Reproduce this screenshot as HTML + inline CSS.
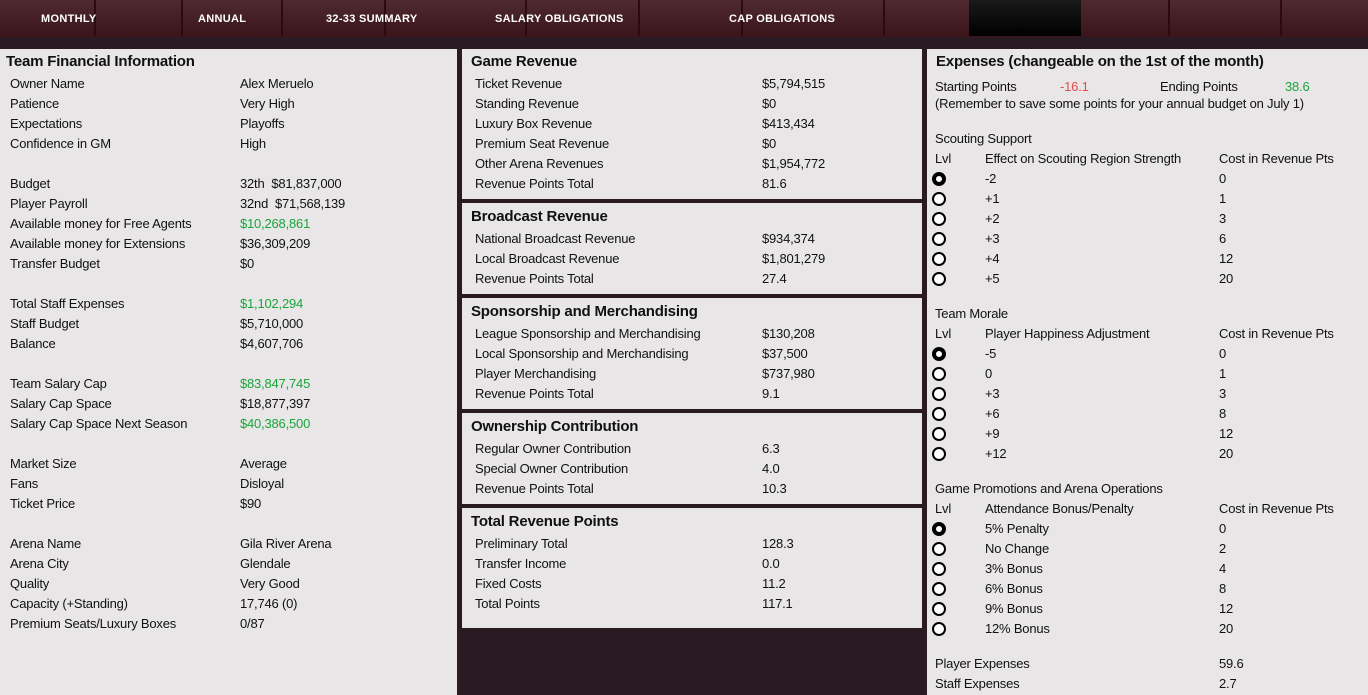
<!DOCTYPE html>
<html><head><meta charset="utf-8"><style>
*{margin:0;padding:0;box-sizing:border-box}
body{width:1368px;height:695px;overflow:hidden;background:#2a1a22;font-family:"Liberation Sans",sans-serif;color:#111;position:relative}
.nav{position:absolute;left:0;top:0;width:1368px;height:37px;background:linear-gradient(#4e2a31,#3a1419)}
.strip{position:absolute;left:0;top:37px;width:1368px;height:12px;background:#2a1a24}
.dv{position:absolute;top:0;width:2px;height:36px;background:#2a0c10}
.nl{position:absolute;top:13px;color:#fff;font-weight:bold;font-size:11px;letter-spacing:0.3px;font-family:"Liberation Sans",sans-serif}
.p{position:absolute;background:#e8e6e7}
.t{position:absolute;font-size:15px;font-weight:bold;letter-spacing:-0.2px;color:#111}
.r{position:absolute;font-size:13px;line-height:20px;height:20px;white-space:nowrap;letter-spacing:-0.2px}
.g{color:#1aa53a}.rd{color:#e84a4a}
.rb{position:absolute;width:14px;height:14px;border:2px solid #000;border-radius:50%;background:#fff}
.rb.s{border-width:4px}
</style></head><body>
<div class="nav">
<div class="dv" style="left:94px"></div><div class="dv" style="left:181px"></div><div class="dv" style="left:281px"></div><div class="dv" style="left:384px"></div><div class="dv" style="left:525px"></div><div class="dv" style="left:638px"></div><div class="dv" style="left:741px"></div><div class="dv" style="left:883px"></div><div class="dv" style="left:1168px"></div><div class="dv" style="left:1280px"></div>
<div style="position:absolute;left:969px;top:0;width:112px;height:36px;background:linear-gradient(#1a1a1a,#000)"></div>
<div class="nl" style="left:41px">MONTHLY</div>
<div class="nl" style="left:198px">ANNUAL</div>
<div class="nl" style="left:326px">32-33 SUMMARY</div>
<div class="nl" style="left:495px">SALARY OBLIGATIONS</div>
<div class="nl" style="left:729px">CAP OBLIGATIONS</div>
</div>
<div class="strip"></div>

<div class="p" style="left:0;top:49px;width:457px;height:646px"></div>
<div class="p" style="left:462px;top:49px;width:460px;height:150px"></div>
<div class="p" style="left:462px;top:203px;width:460px;height:91px"></div>
<div class="p" style="left:462px;top:298px;width:460px;height:111px"></div>
<div class="p" style="left:462px;top:413px;width:460px;height:91px"></div>
<div class="p" style="left:462px;top:508px;width:460px;height:120px"></div>
<div class="p" style="left:927px;top:49px;width:441px;height:646px"></div>

<div class="t" style="left:6px;top:53px">Team Financial Information</div>
<div class="r" style="left:10px;top:74px">Owner Name</div><div class="r" style="left:240px;top:74px">Alex Meruelo</div>
<div class="r" style="left:10px;top:94px">Patience</div><div class="r" style="left:240px;top:94px">Very High</div>
<div class="r" style="left:10px;top:114px">Expectations</div><div class="r" style="left:240px;top:114px">Playoffs</div>
<div class="r" style="left:10px;top:134px">Confidence in GM</div><div class="r" style="left:240px;top:134px">High</div>
<div class="r" style="left:10px;top:174px">Budget</div><div class="r" style="left:240px;top:174px">32th&nbsp;&nbsp;$81,837,000</div>
<div class="r" style="left:10px;top:194px">Player Payroll</div><div class="r" style="left:240px;top:194px">32nd&nbsp;&nbsp;$71,568,139</div>
<div class="r" style="left:10px;top:214px">Available money for Free Agents</div><div class="r g" style="left:240px;top:214px">$10,268,861</div>
<div class="r" style="left:10px;top:234px">Available money for Extensions</div><div class="r" style="left:240px;top:234px">$36,309,209</div>
<div class="r" style="left:10px;top:254px">Transfer Budget</div><div class="r" style="left:240px;top:254px">$0</div>
<div class="r" style="left:10px;top:294px">Total Staff Expenses</div><div class="r g" style="left:240px;top:294px">$1,102,294</div>
<div class="r" style="left:10px;top:314px">Staff Budget</div><div class="r" style="left:240px;top:314px">$5,710,000</div>
<div class="r" style="left:10px;top:334px">Balance</div><div class="r" style="left:240px;top:334px">$4,607,706</div>
<div class="r" style="left:10px;top:374px">Team Salary Cap</div><div class="r g" style="left:240px;top:374px">$83,847,745</div>
<div class="r" style="left:10px;top:394px">Salary Cap Space</div><div class="r" style="left:240px;top:394px">$18,877,397</div>
<div class="r" style="left:10px;top:414px">Salary Cap Space Next Season</div><div class="r g" style="left:240px;top:414px">$40,386,500</div>
<div class="r" style="left:10px;top:454px">Market Size</div><div class="r" style="left:240px;top:454px">Average</div>
<div class="r" style="left:10px;top:474px">Fans</div><div class="r" style="left:240px;top:474px">Disloyal</div>
<div class="r" style="left:10px;top:494px">Ticket Price</div><div class="r" style="left:240px;top:494px">$90</div>
<div class="r" style="left:10px;top:534px">Arena Name</div><div class="r" style="left:240px;top:534px">Gila River Arena</div>
<div class="r" style="left:10px;top:554px">Arena City</div><div class="r" style="left:240px;top:554px">Glendale</div>
<div class="r" style="left:10px;top:574px">Quality</div><div class="r" style="left:240px;top:574px">Very Good</div>
<div class="r" style="left:10px;top:594px">Capacity (+Standing)</div><div class="r" style="left:240px;top:594px">17,746 (0)</div>
<div class="r" style="left:10px;top:614px">Premium Seats/Luxury Boxes</div><div class="r" style="left:240px;top:614px">0/87</div>

<div class="t" style="left:471px;top:53px">Game Revenue</div>
<div class="r" style="left:475px;top:74px">Ticket Revenue</div><div class="r" style="left:762px;top:74px">$5,794,515</div>
<div class="r" style="left:475px;top:94px">Standing Revenue</div><div class="r" style="left:762px;top:94px">$0</div>
<div class="r" style="left:475px;top:114px">Luxury Box Revenue</div><div class="r" style="left:762px;top:114px">$413,434</div>
<div class="r" style="left:475px;top:134px">Premium Seat Revenue</div><div class="r" style="left:762px;top:134px">$0</div>
<div class="r" style="left:475px;top:154px">Other Arena Revenues</div><div class="r" style="left:762px;top:154px">$1,954,772</div>
<div class="r" style="left:475px;top:174px">Revenue Points Total</div><div class="r" style="left:762px;top:174px">81.6</div>

<div class="t" style="left:471px;top:208px">Broadcast Revenue</div>
<div class="r" style="left:475px;top:229px">National Broadcast Revenue</div><div class="r" style="left:762px;top:229px">$934,374</div>
<div class="r" style="left:475px;top:249px">Local Broadcast Revenue</div><div class="r" style="left:762px;top:249px">$1,801,279</div>
<div class="r" style="left:475px;top:269px">Revenue Points Total</div><div class="r" style="left:762px;top:269px">27.4</div>

<div class="t" style="left:471px;top:303px">Sponsorship and Merchandising</div>
<div class="r" style="left:475px;top:324px">League Sponsorship and Merchandising</div><div class="r" style="left:762px;top:324px">$130,208</div>
<div class="r" style="left:475px;top:344px">Local Sponsorship and Merchandising</div><div class="r" style="left:762px;top:344px">$37,500</div>
<div class="r" style="left:475px;top:364px">Player Merchandising</div><div class="r" style="left:762px;top:364px">$737,980</div>
<div class="r" style="left:475px;top:384px">Revenue Points Total</div><div class="r" style="left:762px;top:384px">9.1</div>

<div class="t" style="left:471px;top:418px">Ownership Contribution</div>
<div class="r" style="left:475px;top:439px">Regular Owner Contribution</div><div class="r" style="left:762px;top:439px">6.3</div>
<div class="r" style="left:475px;top:459px">Special Owner Contribution</div><div class="r" style="left:762px;top:459px">4.0</div>
<div class="r" style="left:475px;top:479px">Revenue Points Total</div><div class="r" style="left:762px;top:479px">10.3</div>

<div class="t" style="left:471px;top:513px">Total Revenue Points</div>
<div class="r" style="left:475px;top:534px">Preliminary Total</div><div class="r" style="left:762px;top:534px">128.3</div>
<div class="r" style="left:475px;top:554px">Transfer Income</div><div class="r" style="left:762px;top:554px">0.0</div>
<div class="r" style="left:475px;top:574px">Fixed Costs</div><div class="r" style="left:762px;top:574px">11.2</div>
<div class="r" style="left:475px;top:594px">Total Points</div><div class="r" style="left:762px;top:594px">117.1</div>

<div class="t" style="left:936px;top:53px">Expenses (changeable on the 1st of the month)</div>
<div class="r" style="left:935px;top:77px">Starting Points</div><div class="r rd" style="left:1060px;top:77px">-16.1</div>
<div class="r" style="left:1160px;top:77px">Ending Points</div><div class="r g" style="left:1285px;top:77px">38.6</div>
<div class="r" style="left:935px;top:94px">(Remember to save some points for your annual budget on July 1)</div>

<div class="r" style="left:935px;top:129px">Scouting Support</div>
<div class="r" style="left:935px;top:149px">Lvl</div><div class="r" style="left:985px;top:149px">Effect on Scouting Region Strength</div><div class="r" style="left:1219px;top:149px">Cost in Revenue Pts</div>
<div class="rb s" style="left:932px;top:172px"></div><div class="r" style="left:985px;top:169px">-2</div><div class="r" style="left:1219px;top:169px">0</div>
<div class="rb" style="left:932px;top:192px"></div><div class="r" style="left:985px;top:189px">+1</div><div class="r" style="left:1219px;top:189px">1</div>
<div class="rb" style="left:932px;top:212px"></div><div class="r" style="left:985px;top:209px">+2</div><div class="r" style="left:1219px;top:209px">3</div>
<div class="rb" style="left:932px;top:232px"></div><div class="r" style="left:985px;top:229px">+3</div><div class="r" style="left:1219px;top:229px">6</div>
<div class="rb" style="left:932px;top:252px"></div><div class="r" style="left:985px;top:249px">+4</div><div class="r" style="left:1219px;top:249px">12</div>
<div class="rb" style="left:932px;top:272px"></div><div class="r" style="left:985px;top:269px">+5</div><div class="r" style="left:1219px;top:269px">20</div>

<div class="r" style="left:935px;top:304px">Team Morale</div>
<div class="r" style="left:935px;top:324px">Lvl</div><div class="r" style="left:985px;top:324px">Player Happiness Adjustment</div><div class="r" style="left:1219px;top:324px">Cost in Revenue Pts</div>
<div class="rb s" style="left:932px;top:347px"></div><div class="r" style="left:985px;top:344px">-5</div><div class="r" style="left:1219px;top:344px">0</div>
<div class="rb" style="left:932px;top:367px"></div><div class="r" style="left:985px;top:364px">0</div><div class="r" style="left:1219px;top:364px">1</div>
<div class="rb" style="left:932px;top:387px"></div><div class="r" style="left:985px;top:384px">+3</div><div class="r" style="left:1219px;top:384px">3</div>
<div class="rb" style="left:932px;top:407px"></div><div class="r" style="left:985px;top:404px">+6</div><div class="r" style="left:1219px;top:404px">8</div>
<div class="rb" style="left:932px;top:427px"></div><div class="r" style="left:985px;top:424px">+9</div><div class="r" style="left:1219px;top:424px">12</div>
<div class="rb" style="left:932px;top:447px"></div><div class="r" style="left:985px;top:444px">+12</div><div class="r" style="left:1219px;top:444px">20</div>

<div class="r" style="left:935px;top:479px">Game Promotions and Arena Operations</div>
<div class="r" style="left:935px;top:499px">Lvl</div><div class="r" style="left:985px;top:499px">Attendance Bonus/Penalty</div><div class="r" style="left:1219px;top:499px">Cost in Revenue Pts</div>
<div class="rb s" style="left:932px;top:522px"></div><div class="r" style="left:985px;top:519px">5% Penalty</div><div class="r" style="left:1219px;top:519px">0</div>
<div class="rb" style="left:932px;top:542px"></div><div class="r" style="left:985px;top:539px">No Change</div><div class="r" style="left:1219px;top:539px">2</div>
<div class="rb" style="left:932px;top:562px"></div><div class="r" style="left:985px;top:559px">3% Bonus</div><div class="r" style="left:1219px;top:559px">4</div>
<div class="rb" style="left:932px;top:582px"></div><div class="r" style="left:985px;top:579px">6% Bonus</div><div class="r" style="left:1219px;top:579px">8</div>
<div class="rb" style="left:932px;top:602px"></div><div class="r" style="left:985px;top:599px">9% Bonus</div><div class="r" style="left:1219px;top:599px">12</div>
<div class="rb" style="left:932px;top:622px"></div><div class="r" style="left:985px;top:619px">12% Bonus</div><div class="r" style="left:1219px;top:619px">20</div>

<div class="r" style="left:935px;top:654px">Player Expenses</div><div class="r" style="left:1219px;top:654px">59.6</div>
<div class="r" style="left:935px;top:674px">Staff Expenses</div><div class="r" style="left:1219px;top:674px">2.7</div>
</body></html>
